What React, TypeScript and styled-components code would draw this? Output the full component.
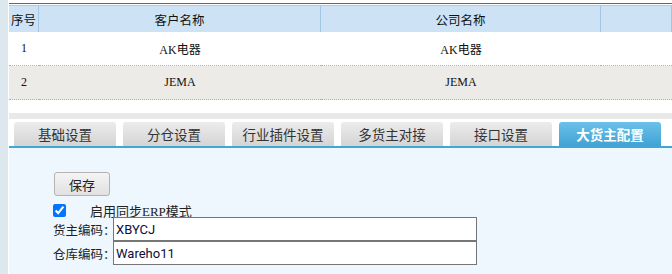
import React from "react";
import styled, { createGlobalStyle } from "styled-components";

const GlobalStyle = createGlobalStyle`
  html, body {
    margin: 0;
    padding: 0;
    background: #ffffff;
    overflow: hidden;
  }
  body {
    font-family: "Noto Sans CJK SC", "Noto Sans", sans-serif;
    color: #222;
  }
`;

const Page = styled.div`
  display: flex;
  width: 672px;
  height: 274px;
  overflow: hidden;
`;

const SideStrip = styled.div`
  width: 8px;
  flex-shrink: 0;
  background: #dde8ee;
`;

const Main = styled.div`
  flex: 1;
  margin-left: 1px;
  padding-top: 3px;
  display: flex;
  flex-direction: column;
  min-width: 0;
  & > * {
    flex-shrink: 0;
  }
`;

const Grid = styled.div`
  display: grid;
  grid-template-columns: 30px 282px 280px 1fr;
  border-top: 1px solid #3a6ea6;
  padding-top: 1px;
`;

const HeadCell = styled.div`
  height: 26px;
  border-top: 1px solid #a8cbe6;
  border-right: 1px solid #a3c7e2;
  background: #cde3f5;
  display: flex;
  align-items: center;
  justify-content: center;
  font-size: 12.5px;
  color: #111;
  &:last-child {
    border-right: none;
  }
`;

const Cell = styled.div<{ $alt?: boolean }>`
  height: 33px;
  border-bottom: 1px dotted #b0b0b0;
  background: ${(p) => (p.$alt ? "#ecebe7" : "#ffffff")};
  display: flex;
  align-items: center;
  justify-content: center;
  font-family: "Liberation Serif", "Noto Sans CJK SC", serif;
  font-size: 12px;
  color: #111;
`;

const Gap = styled.div`
  height: 13px;
`;

const Band = styled.div`
  height: 6px;
  background: #e9e9e9;
`;

const TabBar = styled.div`
  display: flex;
  gap: 7px;
  padding: 3px 0 0 5px;
  border-bottom: 2px solid #45a6d6;
`;

const Tab = styled.div<{ $active?: boolean }>`
  width: 102px;
  height: 24px;
  flex-shrink: 0;
  border-radius: 3px 3px 0 0;
  display: flex;
  align-items: center;
  justify-content: center;
  font-size: 13.5px;
  color: ${(p) => (p.$active ? "#ffffff" : "#333")};
  font-weight: ${(p) => (p.$active ? 700 : 400)};
  background: ${(p) =>
    p.$active
      ? "linear-gradient(#6bc1e9, #40a3d4)"
      : "linear-gradient(#ececec, #d4d4d4)"};
`;

const Panel = styled.div`
  flex: 1 0 auto;
  background: #eef6fe;
  padding: 24px 0 0 44px;
  display: flex;
  flex-direction: column;
  align-items: flex-start;
`;

const SaveButton = styled.button`
  width: 56px;
  height: 24px;
  margin-left: 1px;
  border: 1px solid #b3b3b3;
  border-radius: 3px;
  background: linear-gradient(#f4f4f4, #e1e1e1);
  font-family: "Noto Sans CJK SC", sans-serif;
  font-size: 13px;
  color: #222;
  padding: 0;
`;

const CheckRow = styled.label`
  display: flex;
  align-items: center;
  gap: 24px;
  margin-top: 8px;
  height: 13px;
  font-family: "Liberation Serif", "Noto Sans CJK SC", serif;
  font-size: 13px;
  color: #222;
`;

const Check = styled.input`
  width: 13px;
  height: 13px;
  margin: 0;
`;

const Fields = styled.div`
  display: flex;
  flex-direction: column;
  margin-top: 0;
`;

const FieldRow = styled.div`
  display: flex;
  align-items: center;
  font-size: 12.5px;
  color: #222;
`;

const FieldLabel = styled.span`
  width: 60px;
  flex-shrink: 0;
  white-space: nowrap;
`;

const TextBox = styled.input`
  width: 364px;
  height: 24px;
  box-sizing: border-box;
  border: 1px solid #767676;
  background: #fff;
  padding: 0 2px;
  font-family: Roboto, "Liberation Sans", sans-serif;
  font-size: 13px;
  color: #0d0d3a;
  outline: none;
`;

const rows = [
  { no: "1", customer: "AK电器", company: "AK电器" },
  { no: "2", customer: "JEMA", company: "JEMA" },
];

const tabs = ["基础设置", "分仓设置", "行业插件设置", "多货主对接", "接口设置", "大货主配置"];

export default function App() {
  return (
    <>
      <GlobalStyle />
      <Page>
        <SideStrip />
        <Main>
          <Grid>
            <HeadCell>序号</HeadCell>
            <HeadCell>客户名称</HeadCell>
            <HeadCell>公司名称</HeadCell>
            <HeadCell />
            {rows.map((r, i) => (
              <React.Fragment key={r.no}>
                <Cell $alt={i % 2 === 1}>{r.no}</Cell>
                <Cell $alt={i % 2 === 1}>{r.customer}</Cell>
                <Cell $alt={i % 2 === 1}>{r.company}</Cell>
                <Cell $alt={i % 2 === 1} />
              </React.Fragment>
            ))}
          </Grid>
          <Gap />
          <Band />
          <TabBar>
            {tabs.map((t, i) => (
              <Tab key={t} $active={i === tabs.length - 1}>
                {t}
              </Tab>
            ))}
          </TabBar>
          <Panel>
            <SaveButton>保存</SaveButton>
            <CheckRow>
              <Check type="checkbox" defaultChecked />
              启用同步ERP模式
            </CheckRow>
            <Fields>
              <FieldRow>
                <FieldLabel>货主编码：</FieldLabel>
                <TextBox defaultValue="XBYCJ" />
              </FieldRow>
              <FieldRow>
                <FieldLabel>仓库编码：</FieldLabel>
                <TextBox defaultValue="Wareho11" autoFocus />
              </FieldRow>
            </Fields>
          </Panel>
        </Main>
      </Page>
    </>
  );
}
